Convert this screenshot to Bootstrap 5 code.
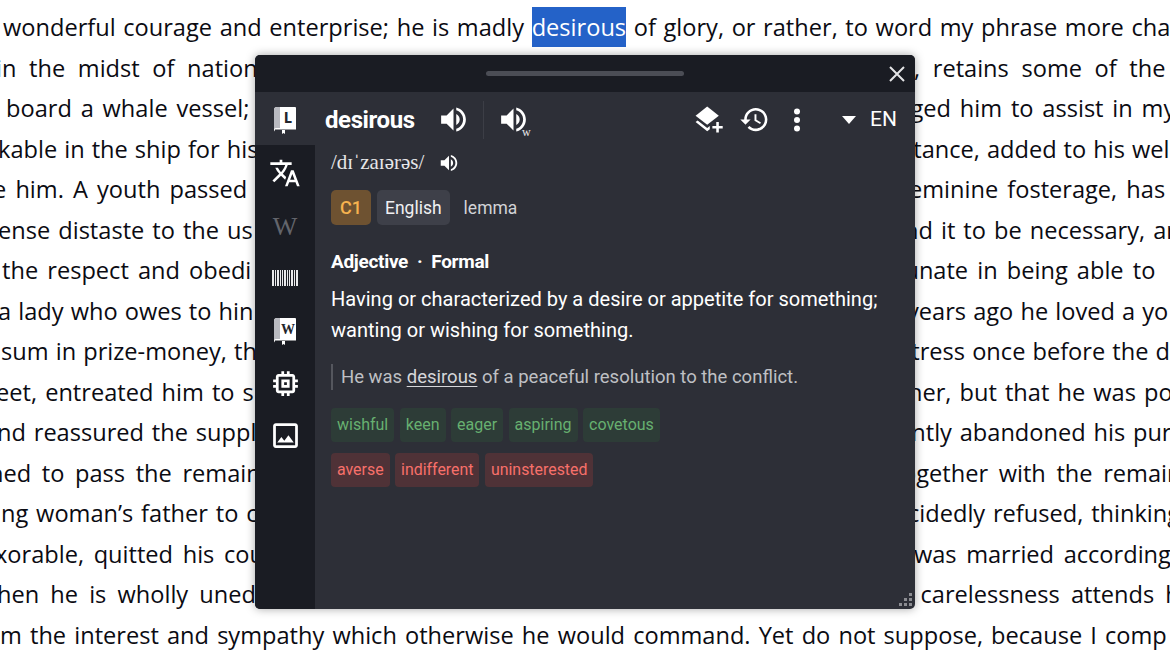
<!DOCTYPE html>
<html lang="en">
<head>
  <meta charset="UTF-8">
  <title>desirous</title>
  <link href="https://cdn.jsdelivr.net/npm/bootstrap@5.3.0/dist/css/bootstrap.min.css" rel="stylesheet">
  <style>
    html, body { height: 100%; overflow: hidden; }
    body { background: #fff; color: #0b0b12; font-family: "Open Sans", sans-serif; font-size: 23.6px; }
    .reader { padding-top: 7px; }
    .ln { display: grid; grid-template-columns: 600px 1fr; height: 40.53px; line-height: 40.53px; white-space: nowrap; overflow: hidden; }
    .ln > span:first-child { margin-left: var(--l, 0); }
    .ln > span:last-child:not(:first-child) { margin-left: calc(var(--r) - 600px); }
    .ln-full { display: block; }
    .ln:nth-child(1)  { word-spacing: 1.5px; --l: 3px; }
    .ln:nth-child(2)  { word-spacing: 6.5px; --l: -4px;  --r: 914px; }
    .ln:nth-child(3)  { word-spacing: 2.7px; --l: 6px;   --r: 896px; }
    .ln:nth-child(4)  { word-spacing: .9px;  --l: -2px;  --r: 902px; }
    .ln:nth-child(5)  { word-spacing: 3px;   --l: -7px;  --r: 901px; }
    .ln:nth-child(6)  { word-spacing: 1.9px; --l: -2px;  --r: 904px; }
    .ln:nth-child(7)  { word-spacing: 3px;   --l: 2px;   --r: 896px; }
    .ln:nth-child(8)  { word-spacing: 1px;   --l: -2px;  --r: 907px; }
    .ln:nth-child(9)  { word-spacing: 1px;   --l: 1px;   --r: 900px; }
    .ln:nth-child(10) { word-spacing: 2px;   --l: -4px;  --r: 899.500px; }
    .ln:nth-child(11) { word-spacing: 1.7px; --l: -3px;  --r: 898px; }
    .ln:nth-child(12) { word-spacing: 4.5px; --l: -11px; --r: 902px; }
    .ln:nth-child(13) { word-spacing: 1.7px; --l: 1px;   --r: 908px; }
    .ln:nth-child(14) { word-spacing: 3.5px; --l: -5px;  --r: 891px; }
    .ln:nth-child(15) { word-spacing: 5px;   --l: -3px;  --r: 895px; }
    .ln:nth-child(16) { word-spacing: 2px; }
    .hl { display: inline-block; background: #2462c8; color: #fff; line-height: 40px; }
    .popup { position: absolute; left: 255px; top: 55px; width: 660px; height: 554px; background: #2d2f37; border-radius: 5px; color: #fff; font-family: Roboto, sans-serif; box-shadow: 0 0 10px rgba(0,0,0,.35); overflow: hidden; }
    .titlebar { height: 37px; background: #1a1c23; }
    .grip { width: 198px; height: 5px; border-radius: 3px; background: #4b4d55; margin-top: 16px; }
    .closer { position: absolute; right: 9px; top: 10px; }
    .head { height: 53px; padding-top: 2px; }
    .logo-cell { width: 60px; }
    .word { font-size: 24px; font-weight: 700; letter-spacing: -.4px; margin-left: 10px; width: 112px; }
    .vr-line { width: 1px; height: 38px; background: #3c3e46; margin: 0 13px; }
    .w-mark { position: absolute; left: 25px; top: 23px; font-family: "Liberation Serif", serif; font-size: 12px; line-height: 12px; color: #e6e6e8; }
    .lang { font-size: 21px; margin: 0 18px 0 14px; }
    .hist-gap { margin-left: 15px; }
    .more-gap { margin-left: 22px; }
    .caret-gap { margin-left: 40px; }
    .side { width: 60px; background: #1a1c23; padding-top: 2px; }
    .side-item { height: 52.5px; }
    .main { padding-left: 16px; }
    .phon { font-family: "Liberation Serif", serif; font-size: 21px; height: 36px; color: #e6e6e8; gap: 14px; }
    .tag { font-size: 18px; padding: 6.500px 8px; border-radius: 5px; line-height: 22px; }
    .tag-lvl { background: #6e5231; color: #f7b24f; font-weight: 500; padding-left: 9px; padding-right: 9px; }
    .tag-src { background: #3e4049; color: #f0f0f2; font-size: 17.500px; }
    .tag-lemma { color: #d2d3d6; padding-left: 8px; font-size: 17.500px; }
    .tag-row { margin-top: 9px; gap: 6px; }
    .pos { font-size: 19px; font-weight: 700; letter-spacing: -.3px; margin-top: 23px; }
    .sense { font-size: 20.050px; line-height: 31px; margin-top: 7px; width: 570px; }
    .quote { border-left: 2px solid #55575e; color: #bfc0c4; font-size: 18.500px; line-height: 26px; padding-left: 8px; margin-top: 18px; }
    .quote u { color: #d6d7da; text-underline-offset: 3px; }
    .chip { font-size: 16px; line-height: 20px; padding: 7px 6px; border-radius: 4px; }
    .chip-syn { background: #2d3c37; color: #67b070; }
    .chip-ant { background: #4f3237; color: #f7706a; font-size: 15.900px; }
    .chips { gap: 5.500px; }
    .chips-syn { margin-top: 18px; }
    .chips-ant { margin-top: 11px; }
    .resize { position: absolute; right: 2px; bottom: 2px; }
  </style>
</head>
<body>
  <div class="reader">
    <div class="ln ln-full"><span>wonderful courage and enterprise; he is madly <span class="hl">desirous</span> of glory, or rather, to word my phrase more cha</span></div>
    <div class="ln"><span>in the midst of nation</span><span>, retains some of the</span></div>
    <div class="ln"><span>board a whale vessel;</span><span>nged him to assist in my</span></div>
    <div class="ln"><span>kable in the ship for his</span><span>stance, added to his wel</span></div>
    <div class="ln"><span>e him. A youth passed</span><span>feminine fosterage, has</span></div>
    <div class="ln"><span>ense distaste to the us</span><span>nd it to be necessary, ar</span></div>
    <div class="ln"><span>the respect and obedi</span><span>tunate in being able to</span></div>
    <div class="ln"><span>a lady who owes to hin</span><span>years ago he loved a yo</span></div>
    <div class="ln"><span>sum in prize-money, th</span><span>stress once before the d</span></div>
    <div class="ln"><span>eet, entreated him to s</span><span>ther, but that he was po</span></div>
    <div class="ln"><span>nd reassured the suppli</span><span>ently abandoned his pur</span></div>
    <div class="ln"><span>ned to pass the remain</span><span>ogether with the remair</span></div>
    <div class="ln"><span>ng woman’s father to c</span><span>cidedly refused, thinking</span></div>
    <div class="ln"><span>xorable, quitted his cou</span><span>e was married according</span></div>
    <div class="ln"><span>hen he is wholly uned</span><span>d carelessness attends h</span></div>
    <div class="ln ln-full"><span>m the interest and sympathy which otherwise he would command. Yet do not suppose, because I comp</span></div>
  </div>

  <div class="popup d-flex flex-column">
    <div class="titlebar d-flex justify-content-center flex-shrink-0">
      <div class="grip"></div>
      <svg class="closer" width="18" height="18" viewBox="0 0 18 18"><path d="M2 2l14 14M16 2L2 16" stroke="#e4e4e6" stroke-width="2" fill="none"/></svg>
    </div>
    <div class="head d-flex align-items-center flex-shrink-0">
      <div class="logo-cell d-flex justify-content-center">
        <svg width="24" height="28" viewBox="0 0 24 28"><path d="M4 1h18a1 1 0 0 1 1 1v24H4a3 3 0 0 1-3-3V4a3 3 0 0 1 3-3z" fill="#fff"/><path d="M4 1h3v21H4a3 3 0 0 0-3 1V4a3 3 0 0 1 3-3z" fill="#b9bac0"/><path d="M2 23.500h21v2.500H2z" fill="#2d2f37"/><path d="M9 24h3v4l-1.500-1L9 28z" fill="#fff"/><text x="15" y="17" font-family="Roboto, sans-serif" font-weight="900" font-size="14" text-anchor="middle" fill="#23252c">L</text></svg>
      </div>
      <div class="word">desirous</div>
      <svg width="33" height="33" viewBox="0 0 24 24" fill="#fff"><path d="M3 9v6h4l5 5V4L7 9H3zm13.500 3c0-1.770-1.020-3.290-2.500-4.030v8.050c1.480-.73 2.500-2.250 2.500-4.020zM14 3.230v2.060c2.890.86 5 3.540 5 6.710s-2.110 5.850-5 6.710v2.060c4.010-.91 7-4.490 7-8.770s-2.990-7.860-7-8.770z"/></svg>
      <div class="vr-line"></div>
      <div class="position-relative">
        <svg class="d-block" width="33" height="33" viewBox="0 0 24 24" fill="#fff"><path d="M3 9v6h4l5 5V4L7 9H3zm13.500 3c0-1.770-1.020-3.290-2.500-4.030v8.050c1.480-.73 2.500-2.250 2.500-4.020zM14 3.230v2.060c2.890.86 5 3.540 5 6.710s-2.110 5.850-5 6.710v2.060c4.010-.91 7-4.490 7-8.770s-2.990-7.860-7-8.770z"/></svg>
        <span class="w-mark">w</span>
      </div>
      <div class="ms-auto d-flex align-items-center">
        <svg width="31" height="31" viewBox="0 0 24 24" fill="#fff"><path d="M11 2l9 7-9 7-9-7z"/><path d="M3.600 12.800L2 14l9 7 2-1.500v-2.400l-2 1.500z"/><path d="M18 14h2v3h3v2h-3v3h-2v-3h-3v-2h3z"/></svg>
        <svg class="hist-gap" width="31" height="31" viewBox="0 0 24 24" fill="#fff"><path d="M13 3c-4.970 0-9 4.030-9 9H1l3.890 3.890.07.14L9 12H6c0-3.870 3.130-7 7-7s7 3.130 7 7-3.130 7-7 7c-1.930 0-3.680-.79-4.940-2.060l-1.420 1.420C8.270 19.990 10.510 21 13 21c4.970 0 9-4.030 9-9s-4.030-9-9-9zm-1 5v5l4.280 2.540.72-1.210-3.500-2.080V8H12z"/></svg>
        <svg class="more-gap" width="10" height="26" viewBox="0 0 10 26" fill="#fff"><circle cx="5" cy="4.500" r="3"/><circle cx="5" cy="13" r="3"/><circle cx="5" cy="21.500" r="3"/></svg>
        <svg class="caret-gap" width="14" height="8" viewBox="0 0 14 8" fill="#fff"><path d="M0 0h14L7 8z"/></svg>
        <span class="lang">EN</span>
      </div>
    </div>
    <div class="d-flex flex-grow-1">
      <div class="side flex-shrink-0 d-flex flex-column align-items-center">
        <div class="side-item d-flex align-items-center">
          <svg width="32" height="32" viewBox="0 0 24 24" fill="#fff"><path d="M12.870 15.070l-2.540-2.510.03-.03c1.740-1.940 2.980-4.170 3.710-6.530H17V4h-7V2H8v2H1v1.990h11.170C11.500 7.920 10.440 9.750 9 11.350 8.070 10.320 7.300 9.190 6.690 8h-2c.73 1.630 1.730 3.170 2.980 4.560l-5.090 5.020L4 19l5-5 3.110 3.110.76-2.040zM18.500 10h-2L12 22h2l1.120-3h4.750L21 22h2l-4.500-12zm-2.620 7l1.620-4.330L19.120 17h-3.240z"/></svg>
        </div>
        <div class="side-item d-flex align-items-center">
          <svg width="30" height="28" viewBox="0 0 30 28"><text x="15" y="23" font-family="Liberation Serif, serif" font-size="26" text-anchor="middle" fill="#63656c">W</text></svg>
        </div>
        <div class="side-item d-flex align-items-center">
          <svg width="26" height="16" viewBox="0 0 26 16" fill="#e8e8ea"><path d="M0 0h2v16H0zM3 0h1v16H3zM5 0h2v16H5zM8 0h1v16H8zM10 0h1v16h-1zM12 0h2v16h-2zM15 0h1v16h-1zM17 0h1v16h-1zM19 0h2v16h-2zM22 0h1v16h-1zM24 0h2v16h-2z"/></svg>
        </div>
        <div class="side-item d-flex align-items-center">
          <svg width="24" height="28" viewBox="0 0 24 28"><path d="M4 1h18a1 1 0 0 1 1 1v24H4a3 3 0 0 1-3-3V4a3 3 0 0 1 3-3z" fill="#fff"/><path d="M4 1h3v21H4a3 3 0 0 0-3 1V4a3 3 0 0 1 3-3z" fill="#b9bac0"/><path d="M2 23.500h21v2.500H2z" fill="#1a1c23"/><path d="M9 24h3v4l-1.500-1L9 28z" fill="#fff"/><text x="15" y="17" font-family="Liberation Serif, serif" font-weight="700" font-size="14" text-anchor="middle" fill="#23252c">W</text></svg>
        </div>
        <div class="side-item d-flex align-items-center">
          <svg width="33" height="33" viewBox="0 0 24 24" fill="#fff"><path d="M15 9H9v6h6V9zm-2 4h-2v-2h2v2zm8-2V9h-2V7c0-1.100-.9-2-2-2h-2V3h-2v2h-2V3H9v2H7c-1.100 0-2 .9-2 2v2H3v2h2v2H3v2h2v2c0 1.100.9 2 2 2h2v2h2v-2h2v2h2v-2h2c1.100 0 2-.9 2-2v-2h2v-2h-2v-2h2zm-4 6H7V7h10v10z"/></svg>
        </div>
        <div class="side-item d-flex align-items-center">
          <svg width="33" height="33" viewBox="0 0 24 24" fill="#fff"><path d="M19 5v14H5V5h14m0-2H5c-1.100 0-2 .9-2 2v14c0 1.100.9 2 2 2h14c1.100 0 2-.9 2-2V5c0-1.100-.9-2-2-2zm-4.860 8.860l-3 3.870L9 13.140 6 17h12l-3.860-5.140z"/></svg>
        </div>
      </div>
      <div class="main flex-grow-1">
        <div class="phon d-flex align-items-center">
          <span>/dɪˈzaɪərəs/</span>
          <svg width="22" height="22" viewBox="0 0 24 24" fill="#fff"><path d="M3 9v6h4l5 5V4L7 9H3zm13.500 3c0-1.770-1.020-3.290-2.500-4.030v8.050c1.480-.73 2.500-2.250 2.500-4.020zM14 3.230v2.060c2.890.86 5 3.540 5 6.710s-2.110 5.850-5 6.710v2.060c4.010-.91 7-4.490 7-8.770s-2.990-7.860-7-8.770z"/></svg>
        </div>
        <div class="d-flex tag-row">
          <span class="tag tag-lvl">C1</span>
          <span class="tag tag-src">English</span>
          <span class="tag tag-lemma">lemma</span>
        </div>
        <div class="pos">Adjective &nbsp;· &nbsp;Formal</div>
        <div class="sense">Having or characterized by a desire or appetite for something; wanting or wishing for something.</div>
        <div class="quote">He was <u>desirous</u> of a peaceful resolution to the conflict.</div>
        <div class="chips chips-syn d-flex">
          <span class="chip chip-syn">wishful</span><span class="chip chip-syn">keen</span><span class="chip chip-syn">eager</span><span class="chip chip-syn">aspiring</span><span class="chip chip-syn">covetous</span>
        </div>
        <div class="chips chips-ant d-flex">
          <span class="chip chip-ant">averse</span><span class="chip chip-ant">indifferent</span><span class="chip chip-ant">uninsterested</span>
        </div>
      </div>
    </div>
    <svg class="resize" width="14" height="14" viewBox="0 0 14 14" fill="#8b8c91"><path d="M10 0h3v3h-3zM5 5h3v3H5zM10 5h3v3h-3zM0 10h3v3H0zM5 10h3v3H5zM10 10h3v3h-3z"/></svg>
  </div>
  <script src="https://cdn.jsdelivr.net/npm/bootstrap@5.3.0/dist/js/bootstrap.bundle.min.js"></script>
</body>
</html>
